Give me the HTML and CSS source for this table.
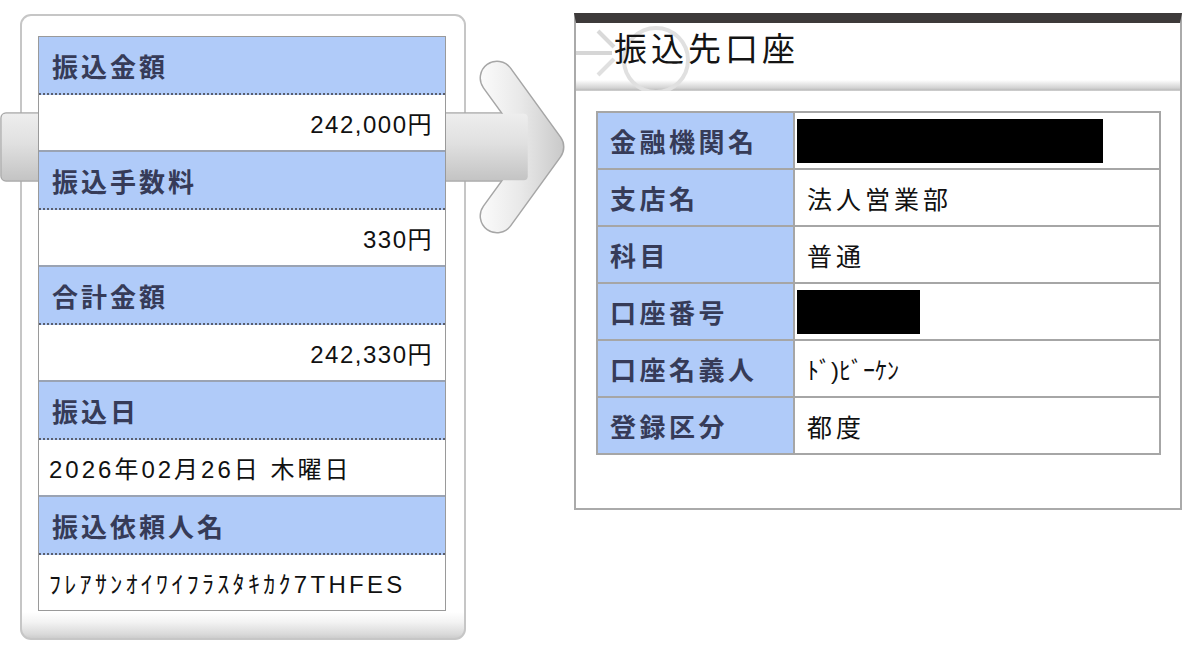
FILE: index.html
```html
<!DOCTYPE html>
<html lang="ja">
<head>
<meta charset="utf-8">
<title>振込内容確認</title>
<link rel="stylesheet" href="styles.css">
</head>
<body>
<div class="page">
  <svg class="arrow" width="570" height="260" viewBox="0 0 570 260" aria-hidden="true">
    <defs>
      <linearGradient id="barGrad" x1="0" y1="113" x2="0" y2="181" gradientUnits="userSpaceOnUse">
        <stop offset="0" stop-color="#eeeeee"/>
        <stop offset="0.45" stop-color="#e0e0e0"/>
        <stop offset="1" stop-color="#c3c3c3"/>
      </linearGradient>
      <linearGradient id="chevGrad" x1="478" y1="0" x2="565" y2="0" gradientUnits="userSpaceOnUse">
        <stop offset="0" stop-color="#fcfcfc"/>
        <stop offset="0.5" stop-color="#e8e8e8"/>
        <stop offset="1" stop-color="#c8c8c8"/>
      </linearGradient>
    </defs>
    <rect x="1" y="113" width="530" height="68" rx="5" fill="url(#barGrad)" stroke="#a9a9a9" stroke-width="1.5"/>
    <polyline points="497,78 547,147 497,216" fill="none" stroke="#a6a6a6" stroke-width="35" stroke-linecap="round" stroke-linejoin="round"/>
    <polyline points="497,78 547,147 497,216" fill="none" stroke="url(#chevGrad)" stroke-width="32" stroke-linecap="round" stroke-linejoin="round"/>
    <rect x="1.75" y="113.75" width="526" height="66.5" rx="4" fill="url(#barGrad)"/>
  </svg>

  <section class="summary">
    <div class="sum-list">
      <div class="sum-head">振込金額</div>
      <div class="sum-val amount">242,000円</div>
      <div class="sum-head">振込手数料</div>
      <div class="sum-val amount">330円</div>
      <div class="sum-head">合計金額</div>
      <div class="sum-val amount">242,330円</div>
      <div class="sum-head">振込日</div>
      <div class="sum-val date">2026年02月26日 木曜日</div>
      <div class="sum-head">振込依頼人名</div>
      <div class="sum-val kana">ﾌﾚｱｻﾝｵｲﾜｲﾌﾗｽﾀｷｶｸ7THFES</div>
    </div>
  </section>

  <section class="dest">
    <header class="dest-head">
      <svg class="dest-logo" width="120" height="68" viewBox="0 0 120 68" aria-hidden="true">
        <circle cx="80" cy="37" r="32" fill="none" stroke="#e0e0e0" stroke-width="4"/>
        <line x1="0" y1="30" x2="36" y2="30" stroke="#d6d6d6" stroke-width="4"/>
        <line x1="22" y1="8" x2="38" y2="24" stroke="#d9d9d9" stroke-width="4"/>
        <line x1="22" y1="52" x2="38" y2="36" stroke="#e0e0e0" stroke-width="4"/>
      </svg>
      <h2 class="dest-title">振込先口座</h2>
    </header>
    <div class="dest-body">
      <table class="dest-table">
        <tr><th>金融機関名</th><td><span class="mask mask-wide"></span></td></tr>
        <tr><th>支店名</th><td class="jp">法人営業部</td></tr>
        <tr><th>科目</th><td class="jp">普通</td></tr>
        <tr><th>口座番号</th><td><span class="mask mask-narrow"></span></td></tr>
        <tr><th>口座名義人</th><td class="kana-s">ﾄﾞ)ﾋﾞｰｹﾝ</td></tr>
        <tr><th>登録区分</th><td class="jp">都度</td></tr>
      </table>
    </div>
  </section>
</div>
</body>
</html>
```

FILE: styles.css
```css
* {
  box-sizing: border-box;
}

html,
body {
  margin: 0;
  padding: 0;
  background: #ffffff;
}

body {
  font-family: "Liberation Sans", "Noto Sans CJK JP", sans-serif;
  color: #111111;
}

.page {
  position: relative;
  width: 1200px;
  height: 652px;
  display: flex;
  align-items: flex-start;
  gap: 108px;
  padding: 14px 0 0 20px;
  overflow: hidden;
}

.arrow {
  position: absolute;
  left: 0;
  top: 0;
}

/* ---------- left summary panel ---------- */
.summary {
  width: 446px;
  height: 626px;
  flex: none;
  border: 2px solid #c6c6c6;
  border-radius: 11px;
  padding: 20px 18px 0 16px;
  background: linear-gradient(to bottom,
      #ffffff 0,
      #ffffff calc(100% - 26px),
      #f3f3f3 calc(100% - 16px),
      #dadada calc(100% - 4px),
      #cdcdcd 100%);
}

.sum-list {
  position: relative;
  z-index: 1;
  width: 408px;
  border: 1px solid #9a9a9a;
  background: #ffffff;
}

.sum-head {
  height: 58px;
  padding: 0 13px;
  display: flex;
  align-items: center;
  background: #b0cbf9;
  border-bottom: 2px dotted #5a5f6e;
  color: #363b58;
  font-weight: bold;
  font-size: 26px;
  letter-spacing: 3px;
}

.sum-val {
  height: 57px;
  padding: 0 12px;
  display: flex;
  align-items: center;
  border-bottom: 2px solid #9aa3b3;
  font-size: 24px;
  color: #111111;
}

.sum-val:last-child {
  border-bottom: none;
  height: 55px;
}

.amount {
  justify-content: flex-end;
  letter-spacing: 1.5px;
}

.date {
  padding-left: 10px;
  letter-spacing: 3px;
}

.kana {
  padding-left: 10px;
  letter-spacing: 3.3px;
}

/* ---------- right destination panel ---------- */
.dest {
  width: 608px;
  height: 497px;
  flex: none;
  margin-top: -1px;
  border: 2px solid #aaaaaa;
  border-top: 10px solid #3d3a3a;
  background: #ffffff;
}

.dest-head {
  position: relative;
  height: 68px;
  padding: 7px 0 0 38px;
  background: linear-gradient(to bottom,
      #ffffff 0,
      #ffffff 57px,
      #eeeeee 60px,
      #d2d2d2 65px,
      #bdbdbd 67px,
      #d8d8d8 68px);
  overflow: hidden;
}

.dest-logo {
  position: absolute;
  left: 0;
  top: 0;
}

.dest-title {
  position: relative;
  margin: 0;
  font-size: 33px;
  line-height: 40px;
  font-weight: normal;
  letter-spacing: 4px;
  color: #141414;
}

.dest-body {
  padding: 20px 19px 0 20px;
}

.dest-table {
  width: 565px;
  border-collapse: collapse;
  border: 2px solid #a6a6a6;
}

.dest-table tr {
  height: 57px;
}

.dest-table th,
.dest-table td {
  border: 2px solid #a6a6a6;
  padding: 0 12px;
  text-align: left;
  vertical-align: middle;
}

.dest-table th {
  width: 197px;
  background: #b0cbf9;
  color: #363b58;
  font-weight: bold;
  font-size: 26px;
  letter-spacing: 3.5px;
}

.dest-table td {
  font-size: 25px;
  color: #111111;
}

.dest-table td.jp {
  letter-spacing: 4px;
}

.dest-table td.kana-s {
  font-size: 24px;
  letter-spacing: 0;
}

.mask {
  display: block;
  height: 44px;
  background: #000000;
  margin-left: -10px;
}

.mask-wide {
  width: 306px;
}

.mask-narrow {
  width: 123px;
}
```
